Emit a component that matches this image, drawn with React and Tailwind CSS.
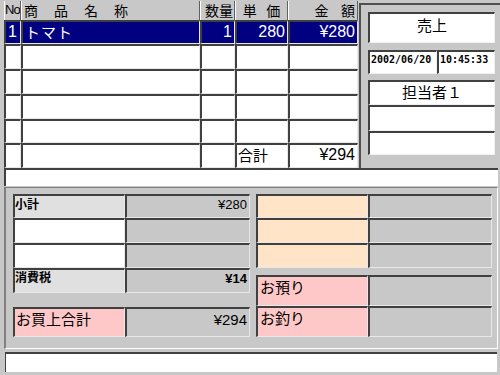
import React from 'react';

const jp = { fontFamily: '"Noto Sans CJK JP", "Liberation Sans", sans-serif' };
const num = { fontFamily: '"Liberation Sans", Arial, sans-serif' };

const cellBorder = 'border-l-2 border-t-2 border-[#404040] border-r border-b border-r-[#e8e8e8] border-b-[#e8e8e8]';

const rows = [
  { no: '1', name: 'トマト', qty: '1', price: '280', amount: '¥280', selected: true },
  {}, {}, {}, {},
];

const GridRow = ({ r }) => {
  const bg = r.selected ? 'bg-[#000080] text-white' : 'bg-white text-black';
  return (
    <div className="grid grid-cols-[17px_179px_35px_53px_70px] h-[25px]">
      <div className={`${cellBorder} ${bg} text-[16px] leading-[20px] pl-[2px]`} style={num}>{r.no}</div>
      <div className={`${cellBorder} ${bg} text-[15px] leading-[20px] pl-[2px] tracking-[1px]`} style={jp}>{r.name}</div>
      <div className={`${cellBorder} ${bg} text-[16px] leading-[20px] text-right pr-[2px]`} style={num}>{r.qty}</div>
      <div className={`${cellBorder} ${bg} text-[16px] leading-[20px] text-right pr-[2px]`} style={num}>{r.price}</div>
      <div className={`${cellBorder} ${bg} text-[16px] leading-[20px] text-right pr-[2px]`} style={num}>{r.amount}</div>
    </div>
  );
};

const Box = ({ className = '', children }) => (
  <div className={`border-l-2 border-t-2 border-[#404040] border-r border-b border-r-[#f0f0f0] border-b-[#f0f0f0] bg-white ${className}`}>
    {children}
  </div>
);

const PCell = ({ className = '', children }) => (
  <div className={`border-l-2 border-t-2 border-[#404040] border-r border-b border-r-[#e8e8e8] border-b-[#e8e8e8] ${className}`}>
    {children}
  </div>
);

export default function App() {
  return (
    <div className="w-[500px] h-[375px] bg-[#c8c8c8] overflow-hidden relative" style={jp}>
      {/* upper area */}
      <div className="flex h-[168px] overflow-hidden">
        <div className="ml-[4px] w-[354px] pt-[1px] flex flex-col">
          <div className="grid grid-cols-[17px_179px_35px_53px_70px] h-[19px] text-[14px] leading-[18px] text-black">
            <div className="border-l border-white border-r border-r-[#606060] text-[13px] tracking-[-1px] overflow-hidden" style={num}>No</div>
            <div className="border-l border-white border-r border-r-[#606060] pl-[2px] tracking-[16px]">商品名称</div>
            <div className="border-l border-white border-r border-r-[#606060] text-right pr-[1px]">数量</div>
            <div className="border-l border-white border-r border-r-[#606060] text-center">単&nbsp;&nbsp;&nbsp;価</div>
            <div className="border-l border-white border-r border-r-[#606060] text-right pr-[2px]">金&nbsp;&nbsp;&nbsp;&nbsp;額</div>
          </div>
          {rows.map((r, i) => <GridRow key={i} r={r} />)}
          <div className="grid grid-cols-[17px_179px_35px_53px_70px] h-[25px]">
            <div className={`${cellBorder} bg-white`} />
            <div className={`${cellBorder} bg-white`} />
            <div className={`${cellBorder} bg-white`} />
            <div className={`${cellBorder} bg-white text-[15px] leading-[19px] pl-[1px]`}>合計</div>
            <div className={`${cellBorder} bg-white text-[16px] leading-[19px] text-right pr-[2px]`} style={num}>¥294</div>
          </div>
        </div>

        <div className="ml-[1px] mt-[3px] flex-1 border-l-2 border-t-2 border-[#505050] bg-[#c8c8c8] pl-[7px] pr-[5px] pt-[7px] flex flex-col">
          <Box className="h-[31px] text-center text-[15px] leading-[22px]">売上</Box>
          <div className="flex mt-[7px] h-[24px]">
            <Box className="w-[69px] text-[10px] font-bold leading-[13px] pl-[1px]"><span style={{ fontFamily: '"DejaVu Sans Mono", monospace' }}>2002/06/20</span></Box>
            <Box className="flex-1 text-[10px] font-bold leading-[13px] pl-[1px]"><span style={{ fontFamily: '"DejaVu Sans Mono", monospace' }}>10:45:33</span></Box>
          </div>
          <div className="mt-[6px] flex flex-col">
            <Box className="h-[25px] text-center text-[15px] leading-[20px]">担当者１</Box>
            <Box className="h-[26px]" />
            <Box className="h-[24px]" />
          </div>
        </div>
      </div>

      {/* input bar */}
      <div className="ml-[4px] w-[494px] h-[18px] bg-white border-t-2 border-l-2 border-[#404040]" />

      {/* bottom panel */}
      <div className="ml-[4px] mt-[1px] w-[494px] h-[162px] border-l-2 border-t border-[#808080] border-r border-r-white border-b border-b-white pl-[7px] pt-[6px] flex gap-[6px]">
        <div className="w-[237px] flex flex-col">
          <div className="grid grid-cols-[112px_125px] h-[24px]">
            <PCell className="bg-[#e0e0e0] text-[12px] font-bold leading-[15px]">小計</PCell>
            <PCell className="bg-[#c8c8c8] text-[13px] leading-[15px] text-right pr-[2px]"><span style={num}>¥280</span></PCell>
          </div>
          <div className="grid grid-cols-[112px_125px] h-[25px]">
            <PCell className="bg-white" />
            <PCell className="bg-[#c8c8c8]" />
          </div>
          <div className="grid grid-cols-[112px_125px] h-[25px]">
            <PCell className="bg-white" />
            <PCell className="bg-[#c8c8c8]" />
          </div>
          <div className="grid grid-cols-[112px_125px] h-[25px]">
            <PCell className="bg-[#e0e0e0] text-[12px] font-bold leading-[13px]">消費税</PCell>
            <PCell className="bg-[#c8c8c8] text-[13px] font-bold leading-[15px] text-right pr-[2px]"><span style={num}>¥14</span></PCell>
          </div>
          <div className="grid grid-cols-[112px_125px] h-[30px] mt-[14px]">
            <PCell className="bg-[#ffc8c8] text-[15px] leading-[20px] pl-[1px]">お買上合計</PCell>
            <PCell className="bg-[#c8c8c8] text-[15px] leading-[20px] text-right pr-[2px]"><span style={num}>¥294</span></PCell>
          </div>
        </div>

        <div className="w-[236px] flex flex-col">
          <div className="grid grid-cols-[112px_124px] h-[24px]">
            <PCell className="bg-[#ffe4c8]" />
            <PCell className="bg-[#c8c8c8]" />
          </div>
          <div className="grid grid-cols-[112px_124px] h-[25px]">
            <PCell className="bg-[#ffe4c8]" />
            <PCell className="bg-[#c8c8c8]" />
          </div>
          <div className="grid grid-cols-[112px_124px] h-[25px]">
            <PCell className="bg-[#ffe4c8]" />
            <PCell className="bg-[#c8c8c8]" />
          </div>
          <div className="grid grid-cols-[112px_124px] h-[31px] mt-[7px]">
            <PCell className="bg-[#ffc8c8] text-[15px] leading-[20px] pl-[2px]">お預り</PCell>
            <PCell className="bg-[#c8c8c8]" />
          </div>
          <div className="grid grid-cols-[112px_124px] h-[31px]">
            <PCell className="bg-[#ffc8c8] text-[15px] leading-[20px] pl-[2px]">お釣り</PCell>
            <PCell className="bg-[#c8c8c8]" />
          </div>
        </div>
      </div>

      {/* bottom input */}
      <div className="ml-[5px] mt-[3px] w-[492px] h-[20px] bg-white border-t-2 border-l border-[#404040]" />
    </div>
  );
}
